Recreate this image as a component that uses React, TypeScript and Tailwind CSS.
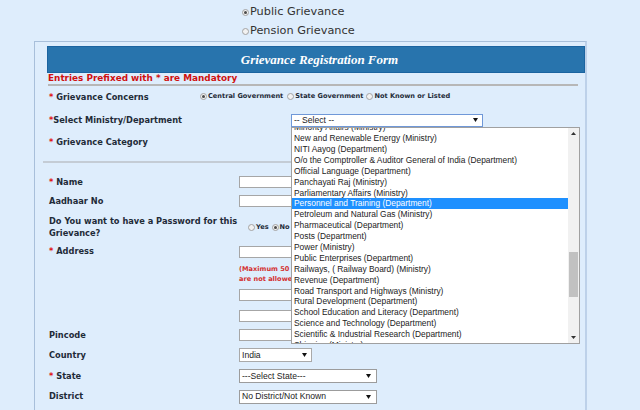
const ministries = [
  "Minority Affairs (Ministry)",
  "New and Renewable Energy (Ministry)",
  "NITI Aayog (Department)",
  "O/o the Comptroller & Auditor General of India (Department)",
  "Official Language (Department)",
  "Panchayati Raj (Ministry)",
  "Parliamentary Affairs (Ministry)",
  "Personnel and Training (Department)",
  "Petroleum and Natural Gas (Ministry)",
  "Pharmaceutical (Department)",
  "Posts (Department)",
  "Power (Ministry)",
  "Public Enterprises (Department)",
  "Railways, ( Railway Board) (Ministry)",
  "Revenue (Department)",
  "Road Transport and Highways (Ministry)",
  "Rural Development (Department)",
  "School Education and Literacy (Department)",
  "Science and Technology (Department)",
  "Scientific & Industrial Research (Department)",
  "Shipping (Ministry)",
];

function Radio({ checked = false }: { checked?: boolean }) {
  return (
    <span className="inline-flex h-[7px] w-[7px] shrink-0 items-center justify-center rounded-full border border-[#a3a3a3] bg-[#f2f2f2]">
      {checked && <span className="h-[3px] w-[3px] rounded-full bg-[#4a4a4a]" />}
    </span>
  );
}

function Caret() {
  return (
    <svg width="5" height="4" viewBox="0 0 5 4">
      <path d="M0 0h5L2.5 4z" fill="#111" />
    </svg>
  );
}

function Star() {
  return <span className="text-[#e01010]">*</span>;
}

function TextBox() {
  return <div className="h-[12px] w-[150px] border border-[#a6a6a6] bg-white" />;
}

export default function App() {
  return (
    <div className="h-[410px] w-[640px] overflow-hidden bg-[#deedfc] font-['DejaVu_Sans',sans-serif] text-[#1f2b38]">
      <div className="pl-[242px] pt-[3px] text-[11.3px] text-[#333]">
        <div className="flex h-[19px] items-center gap-[1px]">
          <Radio checked />
          Public Grievance
        </div>
        <div className="flex h-[19px] items-center gap-[1px]">
          <Radio />
          Pension Grievance
        </div>
      </div>

      <div className="ml-[34px] w-[553px] border-l border-t border-[#a8bfda] border-r-2 border-r-[#bdd1e9] pb-[20px]">
        <div className="ml-[12px] mt-[4px] flex h-[27px] items-center justify-center border border-[#1b64a0] bg-[#2874ad] pl-[7px] font-['Liberation_Serif',serif] text-[13px] font-bold italic text-white">
          Grievance Registration Form
        </div>
        <div className="ml-[13px] h-[11px] text-[8.9px] font-bold leading-[11px] text-[#d01010]">
          Entries Prefixed with * are Mandatory
        </div>
        <div className="ml-[13px] h-[2px] w-[530px] bg-[#b7b7b7]" />

        <div className="pl-[14px] text-[8.25px] font-bold">
          <div className="flex h-[22px] items-center">
            <div className="w-[151px]">
              <Star /> Grievance Concerns
            </div>
            <div className="flex items-center text-[6.6px]">
              <Radio checked />
              <span className="ml-[1px]">Central Government</span>
              <span className="ml-[4px]" />
              <Radio />
              <span className="ml-[1px]">State Government</span>
              <span className="ml-[3px]" />
              <Radio />
              <span className="ml-[1px]">Not Known or Listed</span>
            </div>
          </div>

          <div className="flex h-[24px] items-center">
            <div className="w-[242px]">
              <Star />Select Ministry/Department
            </div>
            <div className="relative">
              <div className="flex h-[13px] w-[192px] items-center justify-between border border-[#6f98d8] bg-white pl-[2px] pr-[4px] font-['Liberation_Sans',sans-serif] text-[8.6px] font-normal text-[#222]">
                -- Select --
                <Caret />
              </div>
              <div className="absolute left-0 top-[13px] z-10 flex h-[217px] w-[289px] border border-[#a0a0a0] bg-white font-['Liberation_Sans',sans-serif] text-[8.4px] font-normal text-[#222]">
                <div className="h-full flex-1 overflow-hidden">
                  <div className="-mt-[5.3px]">
                    {ministries.map((m) => (
                      <div
                        key={m}
                        className={
                          m.startsWith("Personnel")
                            ? "h-[10.9px] whitespace-nowrap bg-[#1e90ff] pl-[2px] leading-[10.9px] text-white"
                            : "h-[10.9px] whitespace-nowrap pl-[2px] leading-[10.9px]"
                        }
                      >
                        {m}
                      </div>
                    ))}
                  </div>
                </div>
                <div className="flex w-[11px] flex-col items-center bg-[#f1f1f1]">
                  <svg width="5" height="3" viewBox="0 0 5 3" className="mt-[4px]">
                    <path d="M0 3h5L2.5 0z" fill="#333" />
                  </svg>
                  <div className="mt-[117px] h-[45px] w-[9px] bg-[#c1c1c1]" />
                  <div className="flex-1" />
                  <svg width="5" height="3" viewBox="0 0 5 3" className="mb-[4px]">
                    <path d="M0 0h5L2.5 3z" fill="#333" />
                  </svg>
                </div>
              </div>
            </div>
          </div>

          <div className="flex h-[20px] items-center">
            <div>
              <Star /> Grievance Category
            </div>
          </div>

          <div className="-ml-[6px] flex h-[20px] items-center">
            <div className="h-[2px] w-[535px] bg-[#c4ccd5]" />
          </div>

          <div className="flex h-[20px] items-center">
            <div className="w-[190px]">
              <Star /> Name
            </div>
            <TextBox />
          </div>

          <div className="flex h-[18px] items-center">
            <div className="w-[190px]">Aadhaar No</div>
            <TextBox />
          </div>

          <div className="flex h-[33px] items-center">
            <div className="w-[199px] leading-[12px]">
              Do You want to have a Password for this
              <br />
              Grievance?
            </div>
            <div className="mt-[2px] flex items-center text-[6.6px]">
              <Radio />
              <span className="ml-[1px]">Yes</span>
              <span className="ml-[3px]" />
              <Radio checked />
              <span className="ml-[1px]">No</span>
            </div>
          </div>

          <div className="flex h-[17px] items-center">
            <div className="w-[190px]">
              <Star /> Address
            </div>
            <TextBox />
          </div>

          <div className="flex h-[25px] pt-[4px]">
            <div className="w-[190px]" />
            <div className="text-[6.6px] leading-[10px] text-[#d43030]">
              (Maximum 50 characters, special characters
              <br />
              are not allowed)
            </div>
          </div>

          <div className="flex h-[20px] items-center">
            <div className="w-[190px]" />
            <TextBox />
          </div>

          <div className="flex h-[21px] items-center">
            <div className="w-[190px]" />
            <TextBox />
          </div>

          <div className="flex h-[18px] items-center">
            <div className="w-[190px]">Pincode</div>
            <TextBox />
          </div>

          <div className="flex h-[22px] items-center">
            <div className="w-[190px]">Country</div>
            <div className="flex h-[14px] w-[73px] items-center justify-between border border-[#a9a9a9] bg-white pl-[2px] pr-[4px] font-['Liberation_Sans',sans-serif] text-[8.6px] font-normal text-[#222]">
              India
              <Caret />
            </div>
          </div>

          <div className="flex h-[20px] items-center">
            <div className="w-[190px]">
              <Star /> State
            </div>
            <div className="flex h-[14px] w-[138px] items-center justify-between border border-[#9c9c9c] bg-white pl-[2px] pr-[5px] font-['Liberation_Sans',sans-serif] text-[8.6px] font-normal text-[#222]">
              ---Select State---
              <Caret />
            </div>
          </div>

          <div className="flex h-[21px] items-center">
            <div className="w-[190px]">District</div>
            <div className="flex h-[14px] w-[138px] items-center justify-between border border-[#9c9c9c] bg-white pl-[2px] pr-[5px] font-['Liberation_Sans',sans-serif] text-[8.6px] font-normal text-[#222]">
              No District/Not Known
              <Caret />
            </div>
          </div>
        </div>
      </div>
    </div>
  );
}
